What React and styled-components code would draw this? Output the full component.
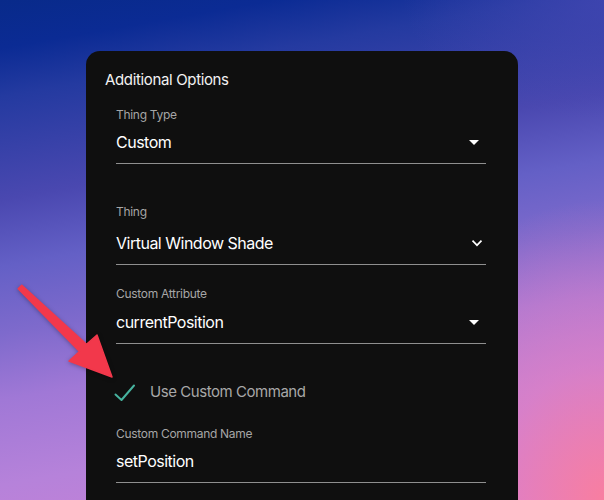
import React from "react";
import styled, { createGlobalStyle } from "styled-components";

const Global = createGlobalStyle`
  html, body { margin: 0; padding: 0; }
  body { font-family: Inter, "Noto Sans", sans-serif; -webkit-font-smoothing: antialiased; }
`;

const Page = styled.div`
  position: relative;
  width: 604px;
  height: 500px;
  overflow: hidden;
  background:
    radial-gradient(ellipse 240px 300px at 100% 100%, rgba(248, 126, 160, 1) 0%, rgba(236, 126, 190, 0.6) 45%, rgba(236, 126, 190, 0) 100%),
    radial-gradient(ellipse 200px 120px at 100% 0%, rgba(70, 72, 180, 0.7) 0%, rgba(70, 72, 180, 0) 100%),
    linear-gradient(170deg, #082a8a 0%, #0b2b94 8%, #243aa0 16%, #4a48b0 33%, #6460c6 44%, #7e6acc 55%, #a078d6 66%, #b682da 80%, #cc80d4 100%);
  padding: 51px 0 0 86px;
  box-sizing: border-box;
`;

const Card = styled.div`
  width: 432px;
  height: 520px;
  background: #0f0f0f;
  border-radius: 14px;
  padding: 19px 32px 0 30px;
  box-sizing: border-box;
  color: #fff;
`;

const Title = styled.div`
  font-size: 15px;
  line-height: 20px;
  margin-left: -11px;
  color: #f2f2f2;
  letter-spacing: -0.35px;
`;

const Field = styled.div`
  margin-top: ${(p) => p.$mt}px;
`;

const Label = styled.div`
  font-size: 12px;
  line-height: 16px;
  color: #a6a6a6;
  letter-spacing: -0.3px;
`;

const InputRow = styled.div`
  display: flex;
  align-items: center;
  justify-content: space-between;
  margin-top: ${(p) => p.$gap}px;
  height: 24px;
  padding-bottom: 9px;
  border-bottom: 1.3px solid #8f8f8f;
`;

const Value = styled.span`
  font-size: 16px;
  line-height: 24px;
  color: #fff;
  letter-spacing: -0.5px;
`;

const IconBox = styled.span`
  display: flex;
  width: 24px;
  height: 24px;
  margin-right: ${(p) => p.$mr || 0}px;
  color: #fff;
`;

const CheckRow = styled.div`
  display: flex;
  align-items: center;
  height: 24px;
  margin-top: 36px;
`;

const CheckBox = styled.span`
  display: flex;
  width: 24px;
  height: 24px;
  margin-left: -3px;
`;

const CheckLabel = styled.span`
  margin-left: 13px;
  font-size: 15px;
  line-height: 24px;
  color: #a8a8a8;
  letter-spacing: -0.45px;
`;

const ArrowSvg = styled.svg`
  position: absolute;
  left: 0;
  top: 0;
  pointer-events: none;
  filter: drop-shadow(0 1px 2px rgba(0, 0, 0, 0.3));
`;

const DropCaret = () => (
  <svg width="24" height="24" viewBox="0 0 24 24">
    <path d="M7 10l5 5 5-5z" fill="currentColor" />
  </svg>
);

const Chevron = () => (
  <svg width="24" height="24" viewBox="0 0 24 24">
    <path d="M16.59 8.59 12 13.17 7.41 8.59 6 10l6 6 6-6z" fill="currentColor" transform="translate(12 12) scale(0.85) translate(-12 -12)" />
  </svg>
);

const SelectField = ({ label, value, mt, gap = 7.5, icon, mr }) => (
  <Field $mt={mt}>
    <Label>{label}</Label>
    <InputRow $gap={gap}>
      <Value>{value}</Value>
      {icon && <IconBox $mr={mr}>{icon}</IconBox>}
    </InputRow>
  </Field>
);

export default function App() {
  return (
    <>
      <Global />
      <Page>
        <Card>
          <Title>Additional Options</Title>
          <SelectField mt={17} gap={7} label="Thing Type" value="Custom" icon={<DropCaret />} />
          <SelectField mt={40} gap={11} label="Thing" value="Virtual Window Shade" icon={<Chevron />} mr={-3} />
          <SelectField mt={21} label="Custom Attribute" value="currentPosition" icon={<DropCaret />} />
          <CheckRow>
            <CheckBox>
              <svg width="24" height="24" viewBox="0 0 24 24">
                <path d="M2.5 14.5 L8.5 20 L21 5.5" fill="none" stroke="#47b39f" strokeWidth="2" strokeLinecap="round" strokeLinejoin="round" />
              </svg>
            </CheckBox>
            <CheckLabel>Use Custom Command</CheckLabel>
          </CheckRow>
          <SelectField mt={22} label="Custom Command Name" value="setPosition" />
        </Card>
        <ArrowSvg width="604" height="500" viewBox="0 0 604 500">
          <polygon
            points="21.8,285.2 86.5,344.4 97,335 112,377 69,361 79.5,351.6 18.2,288.8"
            fill="#f2384b"
            stroke="#f2384b"
            strokeWidth="1.5"
            strokeLinejoin="round"
          />
        </ArrowSvg>
      </Page>
    </>
  );
}
